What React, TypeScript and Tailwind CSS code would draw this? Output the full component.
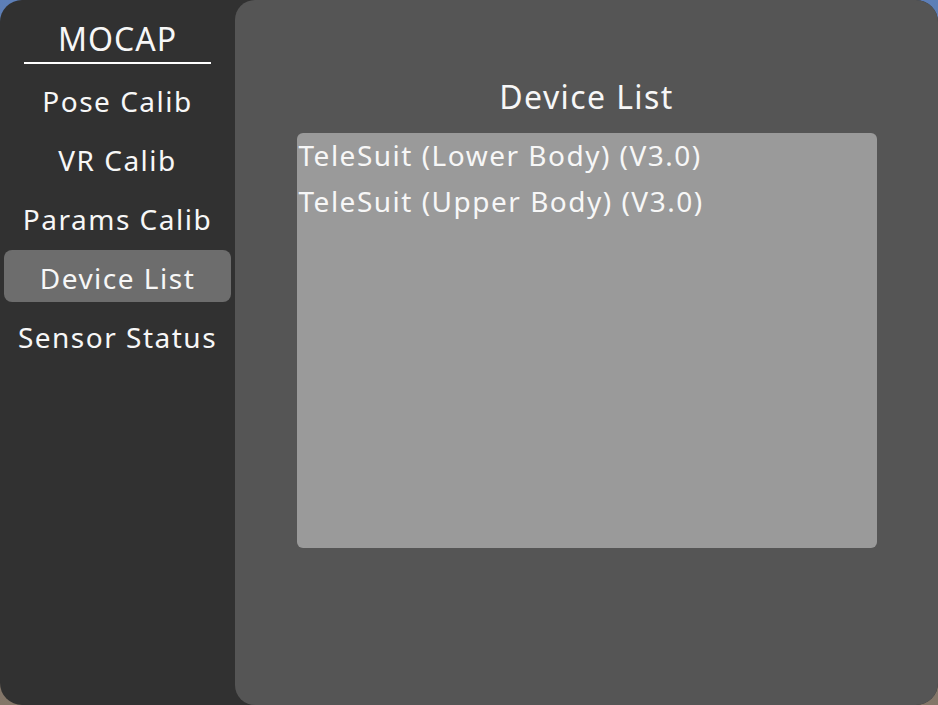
const menu = ["Pose Calib", "VR Calib", "Params Calib", "Device List", "Sensor Status"];

const devices = ["TeleSuit (Lower Body) (V3.0)", "TeleSuit (Upper Body) (V3.0)"];

const App = () => {
  const selected = "Device List";

  return (
    <div
      className="w-[938px] h-[705px] bg-gradient-to-b from-[#5d7fb8] via-[#6a6f80] to-[#847668]"
      style={{ fontFamily: '"Noto Sans", "Open Sans", sans-serif' }}
    >
      <div className="w-full h-full rounded-[22px] overflow-hidden flex bg-[#313131] text-[#f7f7f7]">
        {/* sidebar */}
        <div className="w-[235px] shrink-0 flex flex-col px-[4px]">
          <div className="mt-[17px] h-[44px] leading-[44px] text-[32px] tracking-[1px] text-center">MOCAP</div>
          <div className="mt-[1px] mx-[20px] h-[2px] bg-white" />
          <div className="mt-[9px] flex flex-col gap-[7px]">
            {menu.map((item) => (
              <div
                key={item}
                className={
                  "h-[52px] pt-[3px] flex items-center justify-center text-[28px] tracking-[1.5px] rounded-[8px] " +
                  (item === selected ? "bg-[#6d6d6d]" : "")
                }
              >
                {item}
              </div>
            ))}
          </div>
        </div>

        {/* main panel */}
        <div className="flex-1 bg-[#555555] rounded-l-[20px] flex flex-col items-center">
          <div className="mt-[75px] h-[44px] leading-[44px] text-[32px] tracking-[1.4px]">Device List</div>
          <div className="mt-[14px] w-[580px] h-[415px] bg-[#9a9a9a] rounded-[6px] pl-[2px] pt-[-1px]">
            {devices.map((d) => (
              <div key={d} className="text-[28px] leading-[46px] tracking-[1.5px] -translate-y-[1px]">
                {d}
              </div>
            ))}
          </div>
        </div>
      </div>
    </div>
  );
};

export default App;
